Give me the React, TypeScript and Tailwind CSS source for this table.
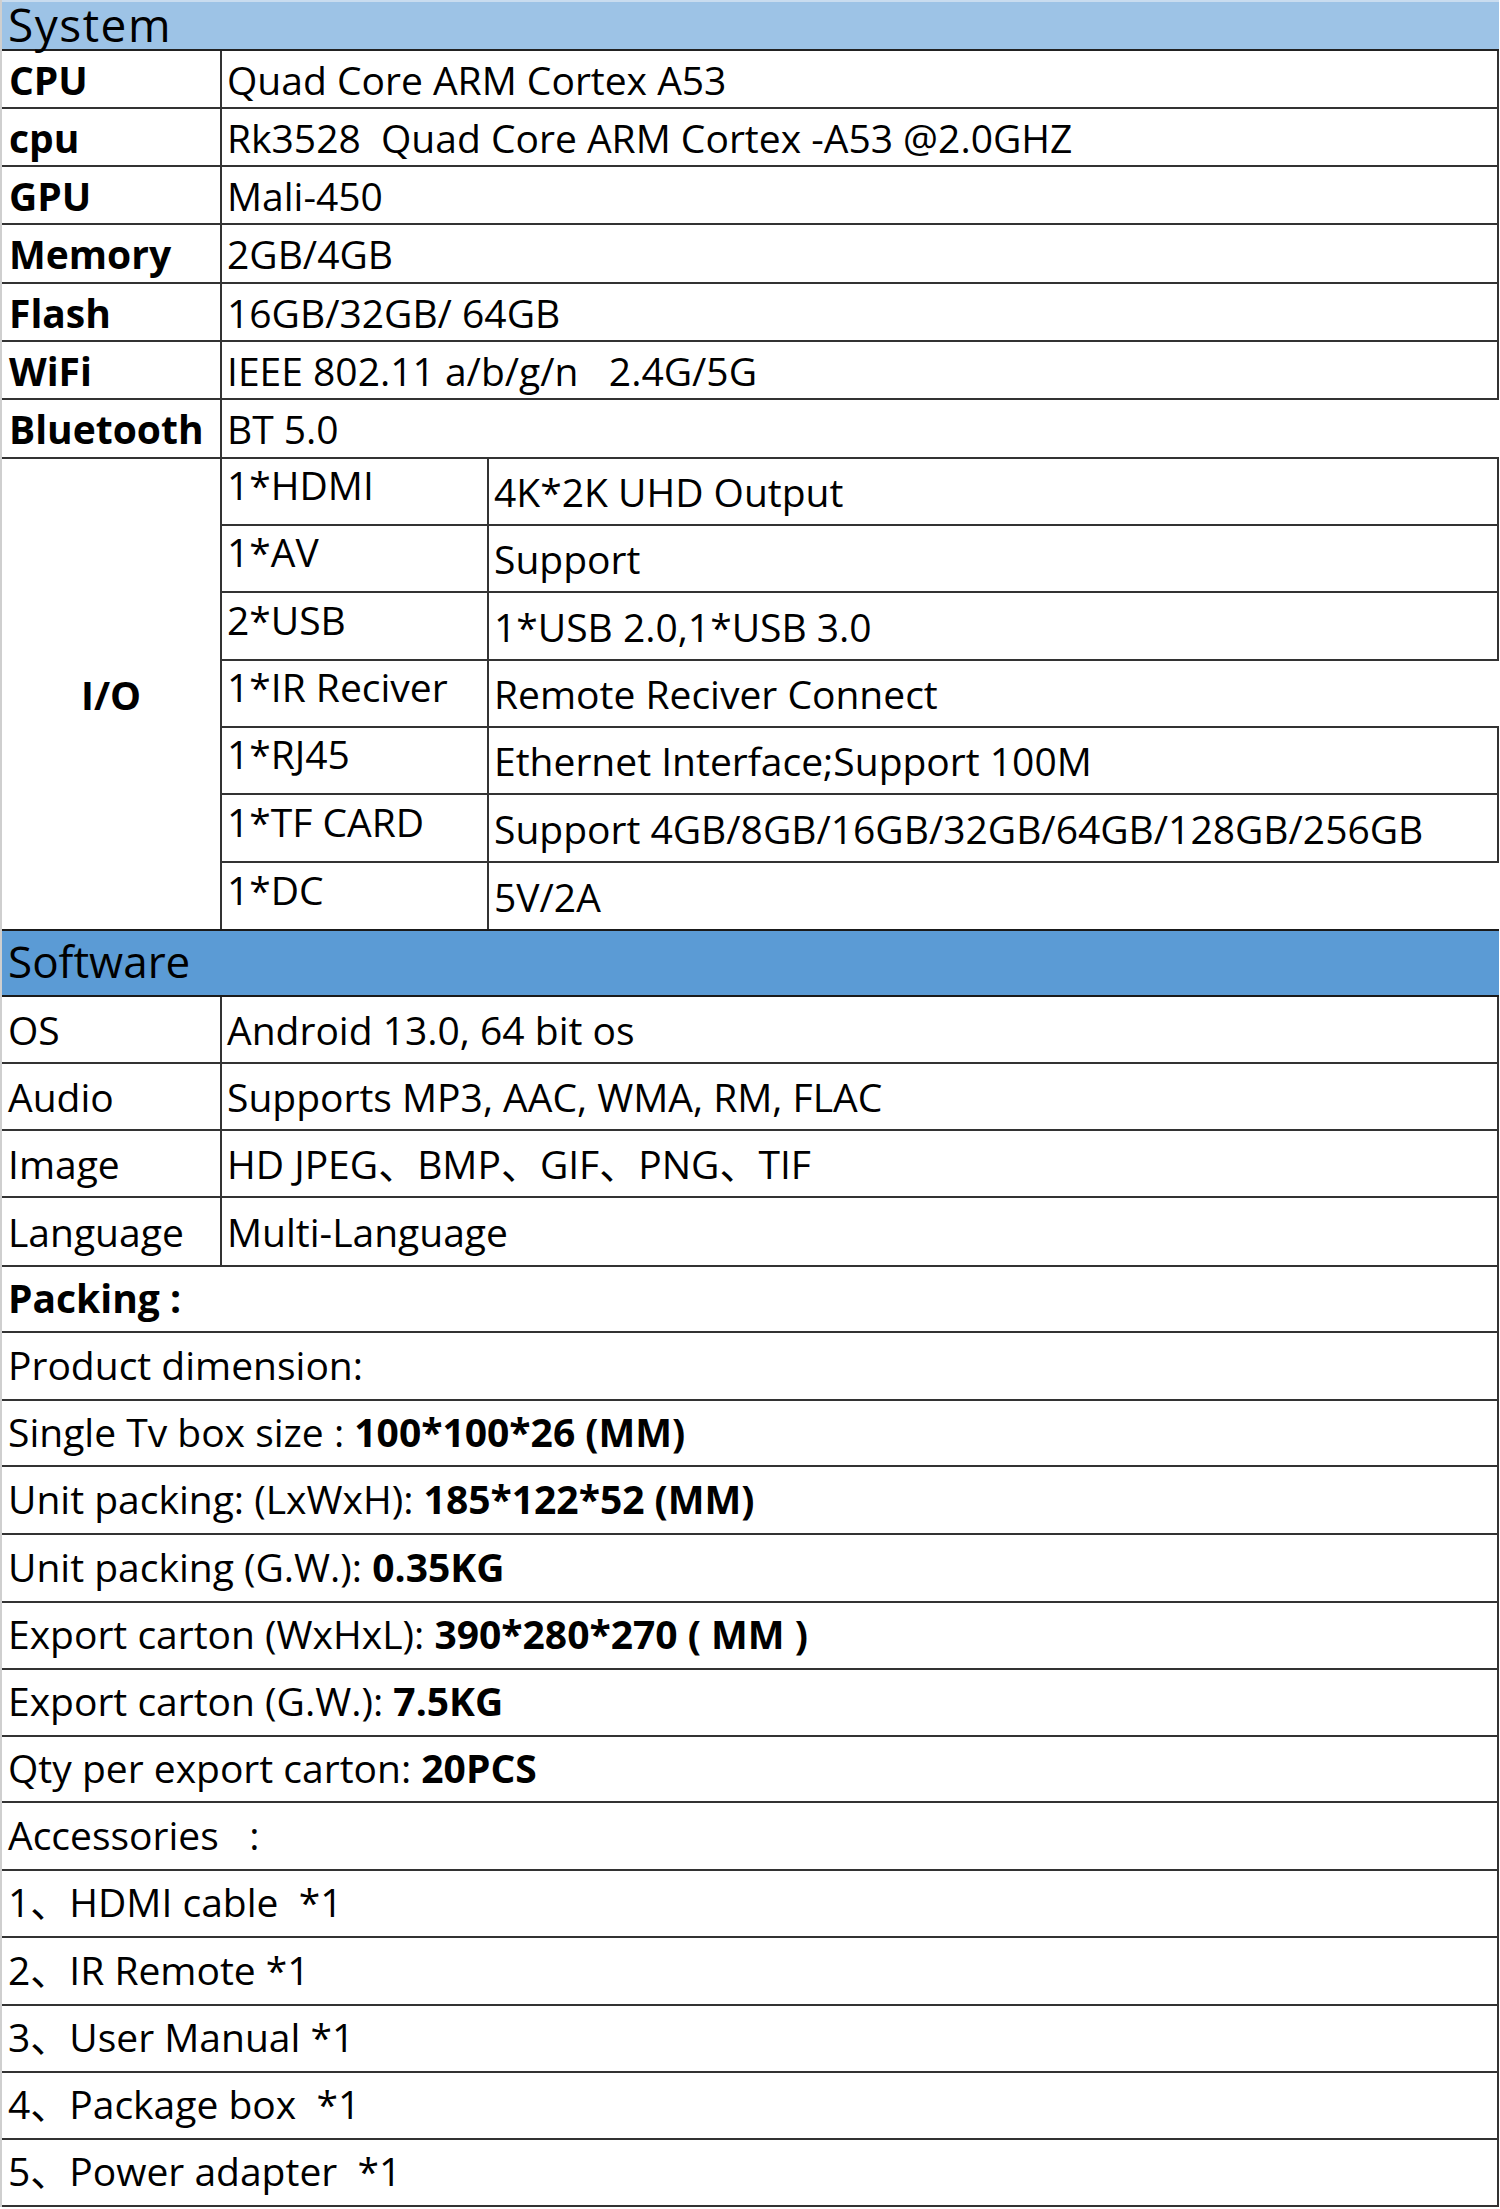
import React from 'react';

const FONT = "font-['Open_Sans','Noto_Sans_CJK_SC',sans-serif]";

const systemRows = [
  { label: 'CPU', value: 'Quad Core ARM Cortex A53', h: 'h-[58px]', right: true },
  { label: 'cpu', value: 'Rk3528  Quad Core ARM Cortex -A53 @2.0GHZ', h: 'h-[58px]', right: true },
  { label: 'GPU', value: 'Mali-450', h: 'h-[58px]', right: true },
  { label: 'Memory', value: '2GB/4GB', h: 'h-[59px]', right: true },
  { label: 'Flash', value: '16GB/32GB/ 64GB', h: 'h-[58px]', right: true },
  { label: 'WiFi', value: 'IEEE 802.11 a/b/g/n   2.4G/5G', h: 'h-[58px]', right: true },
  { label: 'Bluetooth', value: 'BT 5.0', h: 'h-[59px]', right: false },
];

const ioRows = [
  { port: '1*HDMI', desc: '4K*2K UHD Output', h: 'h-[67px]', right: true, last: false },
  { port: '1*AV', desc: 'Support', h: 'h-[67px]', right: true, last: false },
  { port: '2*USB', desc: '1*USB 2.0,1*USB 3.0', h: 'h-[68px]', right: true, last: false },
  { port: '1*IR Reciver', desc: 'Remote Reciver Connect', h: 'h-[67px]', right: false, last: false },
  { port: '1*RJ45', desc: 'Ethernet Interface;Support 100M', h: 'h-[67px]', right: true, last: false },
  { port: '1*TF CARD', desc: 'Support 4GB/8GB/16GB/32GB/64GB/128GB/256GB', h: 'h-[68px]', right: true, last: false },
  { port: '1*DC', desc: '5V/2A', h: 'h-[66px]', right: false, last: true },
];

const softwareRows = [
  { label: 'OS', value: 'Android 13.0, 64 bit os', h: 'h-[67px]' },
  { label: 'Audio', value: 'Supports MP3, AAC, WMA, RM, FLAC', h: 'h-[67px]' },
  { label: 'Image', value: 'HD JPEG、BMP、GIF、PNG、TIF', h: 'h-[67px]' },
  { label: 'Language', value: 'Multi-Language', h: 'h-[69px]' },
];

// plain = normal text, bold = bold part after it
const packingRows: { plain: string; bold?: string; h: string; allBold?: boolean }[] = [
  { plain: 'Packing :', h: 'h-[66px]', allBold: true },
  { plain: 'Product dimension:', h: 'h-[68px]' },
  { plain: 'Single Tv box size : ', bold: '100*100*26 (MM)', h: 'h-[66px]' },
  { plain: 'Unit packing: (LxWxH): ', bold: '185*122*52 (MM)', h: 'h-[68px]' },
  { plain: 'Unit packing (G.W.): ', bold: '0.35KG', h: 'h-[68px]' },
  { plain: 'Export carton (WxHxL): ', bold: '390*280*270 ( MM )', h: 'h-[67px]' },
  { plain: 'Export carton (G.W.): ', bold: '7.5KG', h: 'h-[67px]' },
  { plain: 'Qty per export carton: ', bold: '20PCS', h: 'h-[66px]' },
  { plain: 'Accessories   :', h: 'h-[68px]' },
  { plain: '1、HDMI cable  *1', h: 'h-[67px]' },
  { plain: '2、IR Remote *1', h: 'h-[68px]' },
  { plain: '3、User Manual *1', h: 'h-[67px]' },
  { plain: '4、Package box  *1', h: 'h-[67px]' },
  { plain: '5、Power adapter  *1', h: 'h-[67px]' },
];

export default function App() {
  return (
    <div className={`w-[1500px] bg-white text-black ${FONT} text-[39px] leading-none whitespace-pre`}>
      <div className="w-[1499px] border-l-2 border-[#cfcfcf]">
        {/* System */}
        <div className="h-[51px] bg-[#9dc3e6] border-t-2 border-t-[#c9dcef] border-b-2 border-b-[#222]">
          <span className="block pl-[6px] text-[46px] leading-[40px] pt-[2px] tracking-[1.5px]">System</span>
        </div>

        {systemRows.map((r) => (
          <div
            key={r.label}
            className={`flex ${r.h} border-b-2 border-[#333] ${r.right ? 'border-r-2' : ''}`}
          >
            <div className="w-[220px] shrink-0 flex items-center pl-[7px] font-bold border-r-2 border-[#333]">
              {r.label}
            </div>
            <div className="flex-1 flex items-center pl-[5px]">{r.value}</div>
          </div>
        ))}

        {/* I/O */}
        <div className="flex">
          <div className="w-[220px] shrink-0 flex items-center justify-center font-bold border-r-2 border-[#333]">
            I/O
          </div>
          <div className="flex-1 flex flex-col">
            {ioRows.map((r) => (
              <div
                key={r.port}
                className={`flex ${r.h} ${r.last ? '' : 'border-b-2'} border-[#333] ${r.right ? 'border-r-2' : ''}`}
              >
                <div className="w-[267px] shrink-0 flex items-center pl-[5px] pb-[14px] border-r-2 border-[#333]">
                  {r.port}
                </div>
                <div className="flex-1 flex items-center pl-[5px]">{r.desc}</div>
              </div>
            ))}
          </div>
        </div>

        {/* Software */}
        <div className="h-[68px] bg-[#5b9bd5] border-y-2 border-[#1a1a1a] flex items-center pl-[6px] pb-[4px] text-[44px]">
          Software
        </div>

        {softwareRows.map((r) => (
          <div key={r.label} className={`flex ${r.h} border-b-2 border-r-2 border-[#333]`}>
            <div className="w-[220px] shrink-0 flex items-center pl-[6px] border-r-2 border-[#333]">
              {r.label}
            </div>
            <div className="flex-1 flex items-center pl-[5px]">{r.value}</div>
          </div>
        ))}

        {packingRows.map((r) => (
          <div
            key={r.plain}
            className={`flex items-center ${r.h} pl-[6px] pb-[4px] border-b-2 border-r-2 border-[#333] ${r.allBold ? 'font-bold' : ''}`}
          >
            <span>{r.plain}</span>
            {r.bold && <span className="font-bold">{r.bold}</span>}
          </div>
        ))}
      </div>
    </div>
  );
}
